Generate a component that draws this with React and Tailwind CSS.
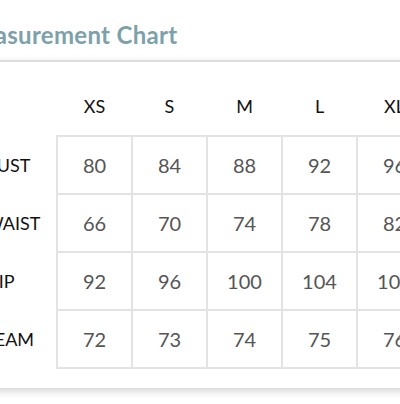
const sizes = ['XS', 'S', 'M', 'L', 'XL'];
const rows = [
  { label: 'BUST', values: [80, 84, 88, 92, 96] },
  { label: 'WAIST', values: [66, 70, 74, 78, 82] },
  { label: 'HIP', values: [92, 96, 100, 104, 108] },
  { label: 'SEAM', values: [72, 73, 74, 75, 76] },
];

const App = () => {
  return (
    <div className="w-[400px] h-[404px] overflow-hidden bg-white font-['Lato',sans-serif]">
      <div className="ml-[-36px] w-[560px] pt-[20px]">
        <h2 className="ml-[-5px] text-[24px] leading-[30px] font-bold text-[#7da1ab] tracking-[0.3px]">
          Measurement Chart
        </h2>
        <div className="mt-[10px] border-t-2 border-[#dddddd] bg-white shadow-[0_3px_8px_rgba(0,0,0,0.18)] pt-[16px] pb-[19px]">
          <table className="border-collapse">
            <thead>
              <tr className="h-[58px]">
                <th className="w-[93px]"></th>
                {sizes.map((s) => (
                  <th key={s} className="w-[75px] text-center text-[18px] font-normal text-[#111]">
                    {s}
                  </th>
                ))}
              </tr>
            </thead>
            <tbody>
              {rows.map((r) => (
                <tr key={r.label} className="h-[58px]">
                  <td className="pl-[21px] text-left text-[18px] text-[#111]">{r.label}</td>
                  {r.values.map((v, i) => (
                    <td
                      key={i}
                      className="border-2 border-[#e3e3e3] text-center text-[20px] text-[#555]"
                    >
                      {v}
                    </td>
                  ))}
                </tr>
              ))}
            </tbody>
          </table>
        </div>
      </div>
    </div>
  );
};

export default App;
